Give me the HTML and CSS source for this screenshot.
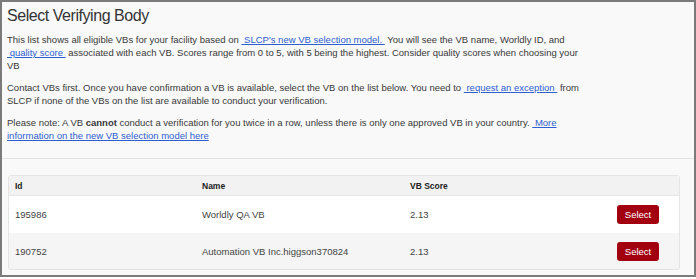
FILE: index.html
```html
<!DOCTYPE html>
<html lang="en">

<head>
    <meta charset="UTF-8">
    <link rel="stylesheet" href="styles.css">
</head>

<body>
    <div class="frame">
        <div class="intro">
            <h1>Select Verifying Body</h1>
            <p>This list shows all eligible VBs for your facility based on <a href="#">&nbsp;SLCP's new VB selection model.&nbsp;</a> You will see the VB name, Worldly ID, and <a href="#">&nbsp;quality score&nbsp;</a> associated with each VB. Scores range from 0 to 5, with 5 being the highest. Consider quality scores when choosing your VB</p>
            <p>Contact VBs first. Once you have confirmation a VB is available, select the VB on the list below. You need to <a href="#">&nbsp;request an exception&nbsp;</a> from SLCP if none of the VBs on the list are available to conduct your verification.</p>
            <p>Please note: A VB <b>cannot</b> conduct a verification for you twice in a row, unless there is only one approved VB in your country. <a href="#">&nbsp;More information on the new VB selection model here</a></p>
        </div>

        <div class="table-card">
            <div class="row head">
                <div>Id</div>
                <div>Name</div>
                <div>VB Score</div>
                <div></div>
            </div>
            <div class="row">
                <div>195986</div>
                <div>Worldly QA VB</div>
                <div>2.13</div>
                <div><button class="select-btn">Select</button></div>
            </div>
            <div class="row alt">
                <div>190752</div>
                <div>Automation VB Inc.higgson370824</div>
                <div>2.13</div>
                <div><button class="select-btn">Select</button></div>
            </div>
        </div>
    </div>
</body>

</html>
```

FILE: styles.css
```css
body,
html {
    margin: 0;
    background: #ffffff;
    font-family: "Liberation Sans", Arial, sans-serif;
}

.frame {
    box-sizing: border-box;
    width: 696px;
    height: 277px;
    border: 2px solid #7b7b7b;
    background-color: #f9f9f9;
}

.intro {
    padding: 0 5px 16px 5px;
    border-bottom: 1px solid #e2e2e2;
}

.intro h1 {
    margin: 0;
    padding-top: 4px;
    font-size: 16px;
    line-height: 20px;
    letter-spacing: -0.45px;
    font-weight: normal;
    color: #333;
}

.intro p {
    max-width: 572px;
    margin: 9px 0 0 0;
    font-size: 9.5px;
    line-height: 13px;
    color: #383838;
}

.intro p:first-of-type {
    margin-top: 7px;
}

.intro a {
    color: #2d5fd0;
    text-decoration: underline;
}

.table-card {
    margin: 16px 14px 0 6px;
    border: 1px solid #e4e4e4;
    border-radius: 3px;
    background: #ffffff;
    overflow: hidden;
}

.row {
    display: grid;
    grid-template-columns: 187px 208px 1fr auto;
    align-items: center;
    height: 37px;
    padding: 0 20px 0 6px;
    font-size: 9.5px;
    color: #444;
}

.row.head {
    height: 19px;
    background-color: #f2f2f2;
    border-bottom: 1px solid #e6e6e6;
    font-size: 8.5px;
    font-weight: bold;
    color: #222;
}

.row.alt {
    height: 36px;
    background-color: #f5f5f5;
}

.select-btn {
    width: 42px;
    height: 19px;
    padding: 0;
    border: none;
    border-radius: 3px;
    background-color: #a3000f;
    color: #fff;
    font-family: "Liberation Sans", Arial, sans-serif;
    font-size: 9.5px;
}
```
